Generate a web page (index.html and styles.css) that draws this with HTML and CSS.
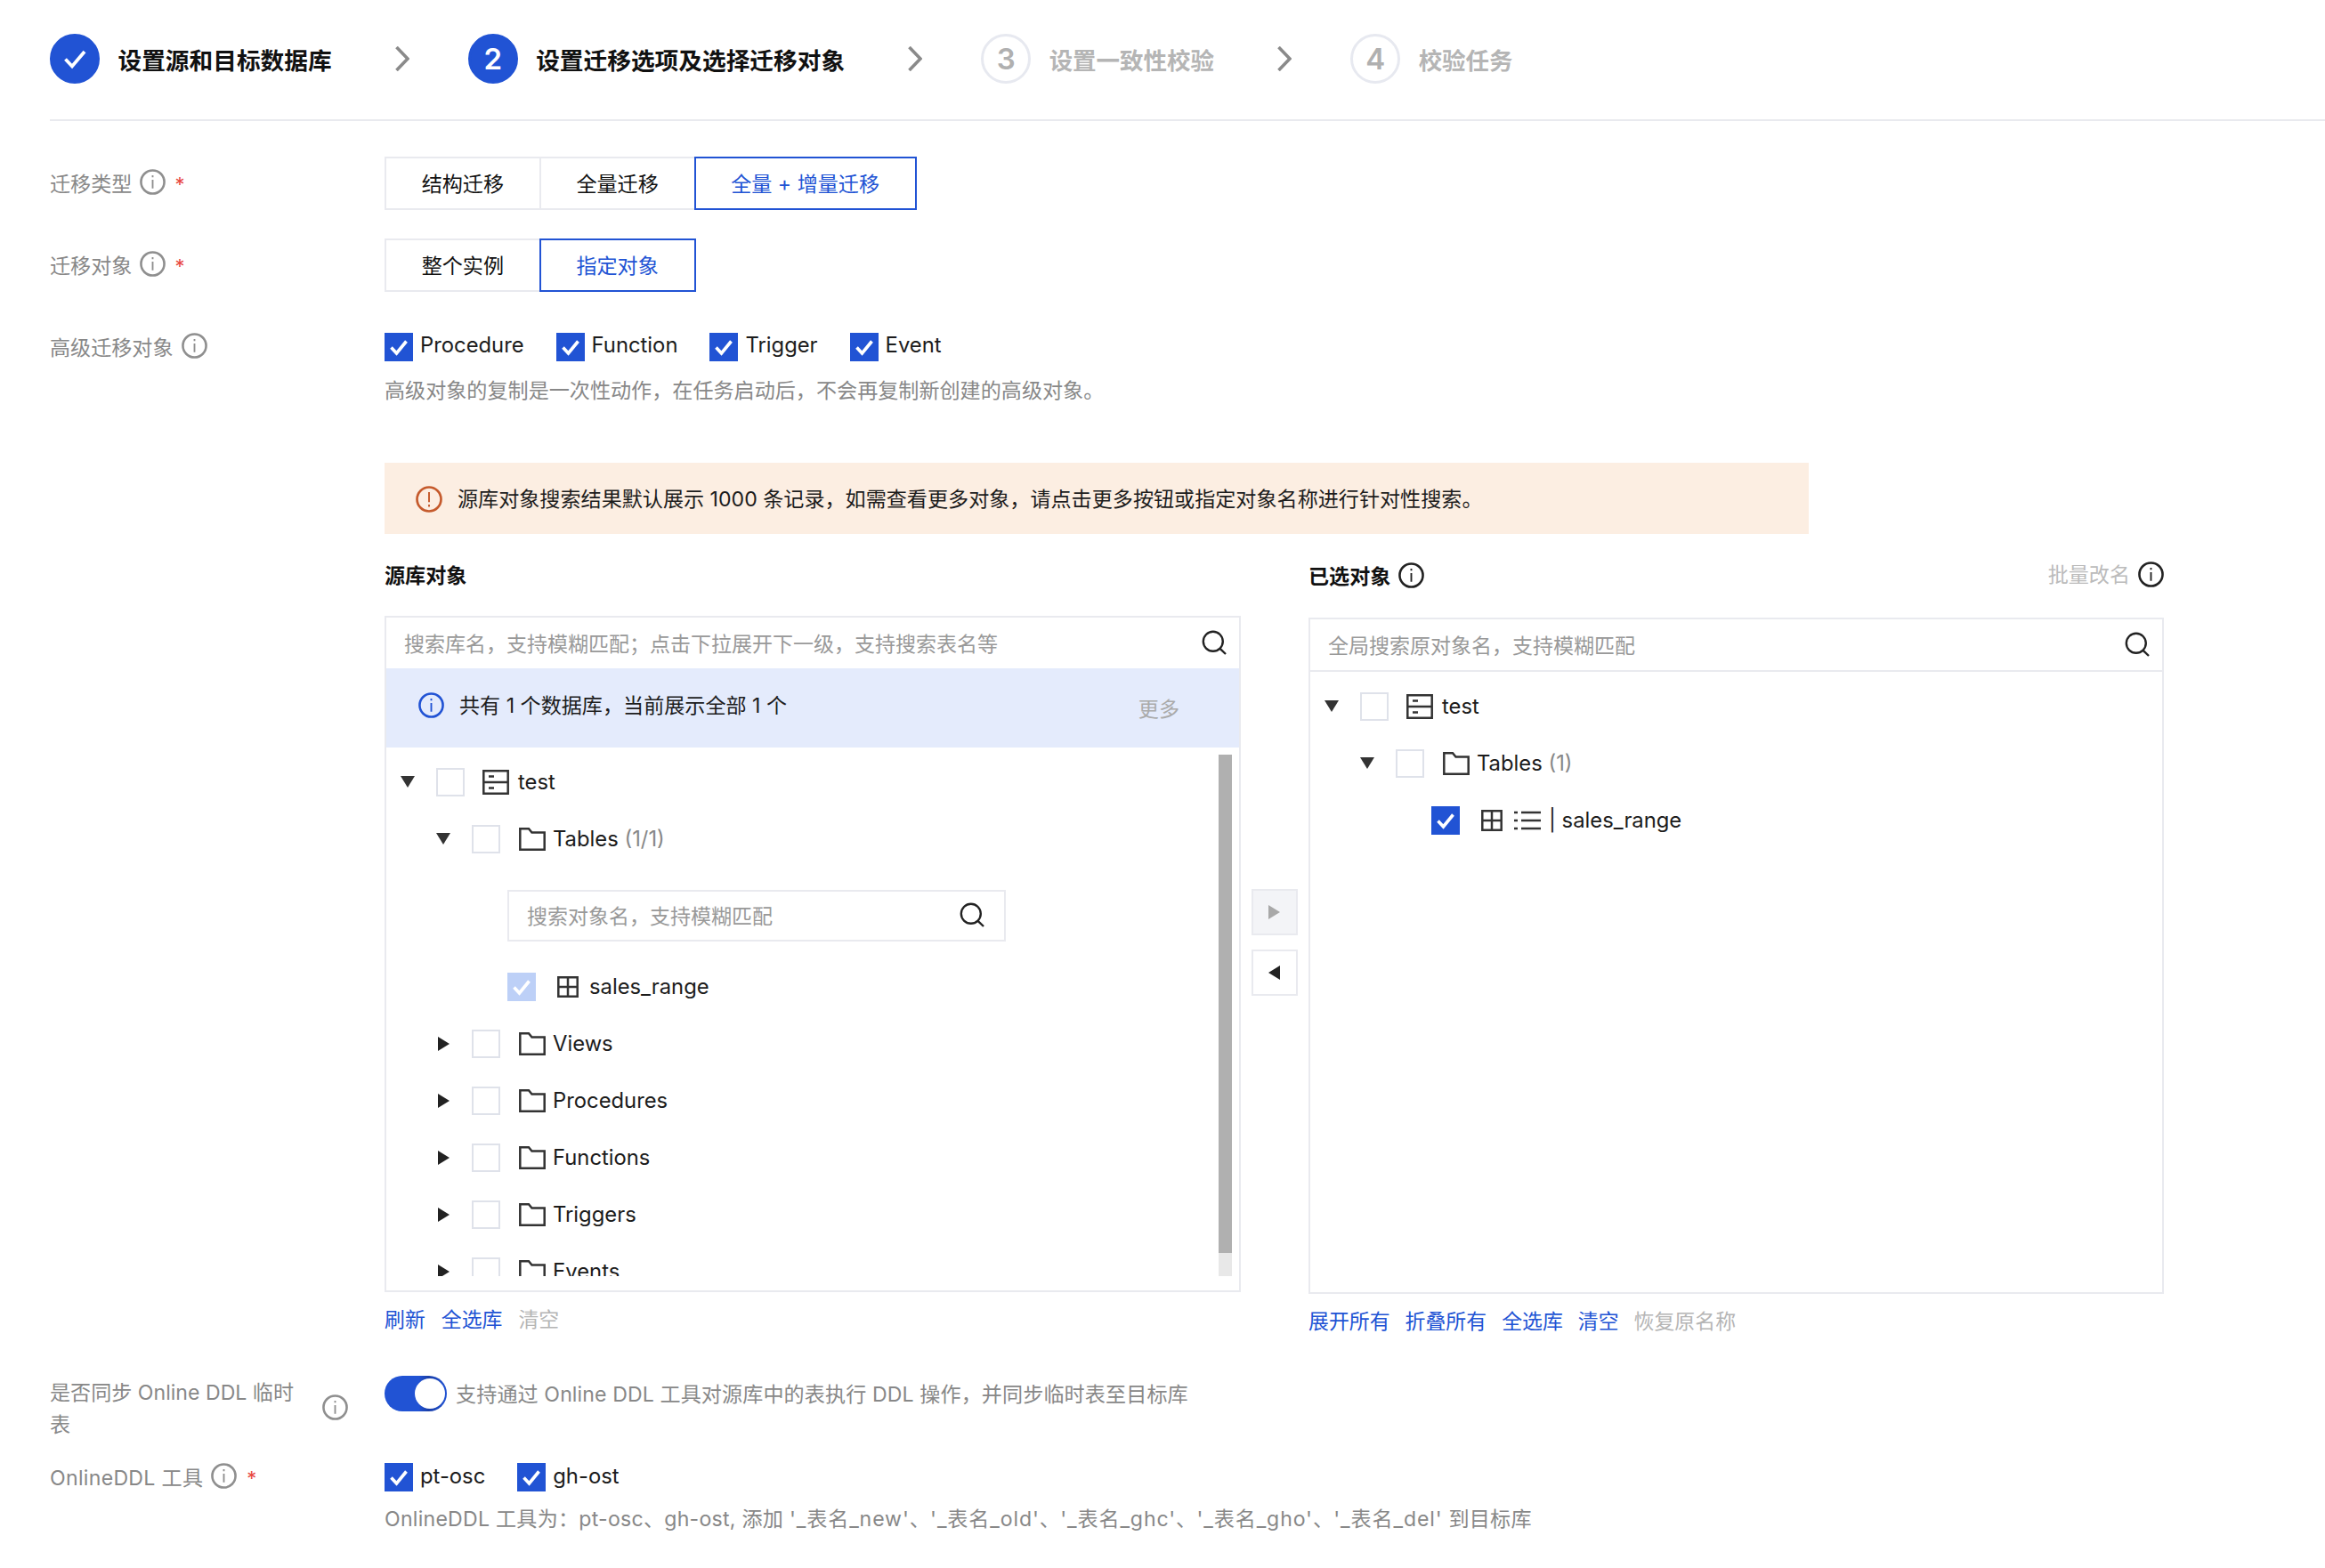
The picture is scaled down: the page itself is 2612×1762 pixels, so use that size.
FILE: index.html
```html
<!DOCTYPE html>
<html lang="zh-CN">
<head>
<meta charset="utf-8">
<title>设置迁移选项</title>
<link rel="stylesheet" href="styles.css">
</head>
<body>
<svg class="defs" aria-hidden="true">
  <symbol id="i-info" viewBox="0 0 28 28"><circle cx="14" cy="14" r="12.6" fill="none" stroke="currentColor" stroke-width="2.5"/><path d="M14 11.5V21M14 6.8V9" fill="none" stroke="currentColor" stroke-width="1.8"/></symbol>
  <symbol id="i-warn" viewBox="0 0 28 28"><circle cx="14" cy="14" r="12.6" fill="none" stroke="currentColor" stroke-width="2.5"/><path d="M14 6.5V17M14 19.5V22" fill="none" stroke="currentColor" stroke-width="1.8"/></symbol>
  <symbol id="i-search" viewBox="0 0 28 28"><circle cx="12.8" cy="12.8" r="11" fill="none" stroke="currentColor" stroke-width="2.4"/><path d="M20.6 20.8L27 27" fill="none" stroke="currentColor" stroke-width="2.4"/></symbol>
  <symbol id="i-chev" viewBox="0 0 16 28"><path d="M1.5 1L14 14L1.5 27" fill="none" stroke="currentColor" stroke-width="3.6"/></symbol>
  <symbol id="i-check" viewBox="0 0 32 32"><path d="M7.5 16.5L13.5 23L24.5 9.5" fill="none" stroke="#fff" stroke-width="3.6"/></symbol>
  <symbol id="i-check-lg" viewBox="0 0 32 32"><path d="M5.5 16.5L13 24.5L27 8" fill="none" stroke="#fff" stroke-width="3.8"/></symbol>
  <symbol id="i-down" viewBox="0 0 16 13"><path d="M0 0H16L8 13Z" fill="currentColor"/></symbol>
  <symbol id="i-right" viewBox="0 0 13 16"><path d="M0 0L13 8L0 16Z" fill="currentColor"/></symbol>
  <symbol id="i-left" viewBox="0 0 13 16"><path d="M13 0L0 8L13 16Z" fill="currentColor"/></symbol>
  <symbol id="i-folder" viewBox="0 0 30 26"><path d="M1.3 24.7V1.3H11L14.5 5.5H28.7V24.7Z" fill="none" stroke="currentColor" stroke-width="2.5"/></symbol>
  <symbol id="i-db" viewBox="0 0 30 28"><path d="M1.3 1.3H28.7V26.7H1.3ZM1.3 14H28.7M7 7.5H13M7 20.5H13" fill="none" stroke="currentColor" stroke-width="2.5"/></symbol>
  <symbol id="i-grid" viewBox="0 0 24 24"><path d="M1.3 1.3H22.7V22.7H1.3ZM1.3 12H22.7M12 1.3V22.7" fill="none" stroke="currentColor" stroke-width="2.5"/></symbol>
  <symbol id="i-list" viewBox="0 0 30 24"><path d="M8 3H30M8 12H30M8 21H30M0 3H4M0 12H4M0 21H4" fill="none" stroke="currentColor" stroke-width="2.4"/></symbol>
</svg>

<div class="page">
  <header class="steps">
    <div class="step">
      <span class="step-dot done"><svg class="ic-check-lg"><use href="#i-check-lg"/></svg></span>
      <span class="step-text">设置源和目标数据库</span>
    </div>
    <svg class="chev"><use href="#i-chev"/></svg>
    <div class="step">
      <span class="step-dot done">2</span>
      <span class="step-text">设置迁移选项及选择迁移对象</span>
    </div>
    <svg class="chev"><use href="#i-chev"/></svg>
    <div class="step off">
      <span class="step-dot">3</span>
      <span class="step-text">设置一致性校验</span>
    </div>
    <svg class="chev"><use href="#i-chev"/></svg>
    <div class="step off">
      <span class="step-dot">4</span>
      <span class="step-text">校验任务</span>
    </div>
  </header>

  <section class="row row-type">
    <div class="label">迁移类型<svg class="info"><use href="#i-info"/></svg><span class="star">*</span></div>
    <div class="seg"><span class="seg-btn">结构迁移</span><span class="seg-btn">全量迁移</span><span class="seg-btn on">全量 + 增量迁移</span></div>
  </section>

  <section class="row row-gap">
    <div class="label">迁移对象<svg class="info"><use href="#i-info"/></svg><span class="star">*</span></div>
    <div class="seg"><span class="seg-btn">整个实例</span><span class="seg-btn on">指定对象</span></div>
  </section>

  <section class="row row-gap">
    <div class="label">高级迁移对象<svg class="info"><use href="#i-info"/></svg></div>
    <div>
      <div class="checks">
        <label class="check"><span class="box on"><svg><use href="#i-check"/></svg></span><span class="check-text">Procedure</span></label>
        <label class="check"><span class="box on"><svg><use href="#i-check"/></svg></span><span class="check-text">Function</span></label>
        <label class="check"><span class="box on"><svg><use href="#i-check"/></svg></span><span class="check-text">Trigger</span></label>
        <label class="check"><span class="box on"><svg><use href="#i-check"/></svg></span><span class="check-text">Event</span></label>
      </div>
      <p class="help">高级对象的复制是一次性动作，在任务启动后，不会再复制新创建的高级对象。</p>
    </div>
  </section>

  <div class="objects">
    <div class="alert"><svg class="alert-ic"><use href="#i-warn"/></svg>源库对象搜索结果默认展示 1000 条记录，如需查看更多对象，请点击更多按钮或指定对象名称进行针对性搜索。</div>

    <div class="transfer">
      <div class="panel">
        <div class="panel-head left-head"><strong>源库对象</strong></div>
        <div class="panel-box">
          <div class="search main-search"><span>搜索库名，支持模糊匹配；点击下拉展开下一级，支持搜索表名等</span><svg class="ic-search"><use href="#i-search"/></svg></div>
          <div class="banner">
            <svg class="banner-ic"><use href="#i-info"/></svg>
            <span class="banner-text">共有 1 个数据库，当前展示全部 1 个</span>
            <span class="more">更多</span>
          </div>
          <div class="tree-wrap">
            <div class="tree">
              <div class="node lv0"><svg class="tri-d"><use href="#i-down"/></svg><span class="box"></span><svg class="ic-db"><use href="#i-db"/></svg><span>test</span></div>
              <div class="node lv1"><svg class="tri-d"><use href="#i-down"/></svg><span class="box"></span><svg class="ic-folder"><use href="#i-folder"/></svg><span>Tables <em>(1/1)</em></span></div>
              <div class="search sub-search"><span>搜索对象名，支持模糊匹配</span><svg class="ic-search"><use href="#i-search"/></svg></div>
              <div class="node lv2"><span class="box soft"><svg><use href="#i-check"/></svg></span><svg class="ic-grid"><use href="#i-grid"/></svg><span>sales_range</span></div>
              <div class="node lv1"><svg class="tri-r"><use href="#i-right"/></svg><span class="box"></span><svg class="ic-folder"><use href="#i-folder"/></svg><span>Views</span></div>
              <div class="node lv1"><svg class="tri-r"><use href="#i-right"/></svg><span class="box"></span><svg class="ic-folder"><use href="#i-folder"/></svg><span>Procedures</span></div>
              <div class="node lv1"><svg class="tri-r"><use href="#i-right"/></svg><span class="box"></span><svg class="ic-folder"><use href="#i-folder"/></svg><span>Functions</span></div>
              <div class="node lv1"><svg class="tri-r"><use href="#i-right"/></svg><span class="box"></span><svg class="ic-folder"><use href="#i-folder"/></svg><span>Triggers</span></div>
              <div class="node lv1"><svg class="tri-r"><use href="#i-right"/></svg><span class="box"></span><svg class="ic-folder"><use href="#i-folder"/></svg><span>Events</span></div>
            </div>
            <div class="scrollbar"><div class="thumb"></div></div>
          </div>
        </div>
        <div class="links left-links"><a class="link">刷新</a><a class="link">全选库</a><a class="link muted">清空</a></div>
      </div>

      <div class="mid">
        <span class="mid-btn off"><svg class="tri-m"><use href="#i-right"/></svg></span>
        <span class="mid-btn"><svg class="tri-m"><use href="#i-left"/></svg></span>
      </div>

      <div class="panel right">
        <div class="panel-head right-head">
          <strong>已选对象</strong><svg class="info dark"><use href="#i-info"/></svg>
          <span class="rename">批量改名</span><svg class="info dark raised"><use href="#i-info"/></svg>
        </div>
        <div class="panel-box">
          <div class="search main-search right-search"><span>全局搜索原对象名，支持模糊匹配</span><svg class="ic-search"><use href="#i-search"/></svg></div>
          <div class="tree">
            <div class="node lv0"><svg class="tri-d"><use href="#i-down"/></svg><span class="box"></span><svg class="ic-db"><use href="#i-db"/></svg><span>test</span></div>
            <div class="node lv1"><svg class="tri-d"><use href="#i-down"/></svg><span class="box"></span><svg class="ic-folder"><use href="#i-folder"/></svg><span>Tables <em>(1)</em></span></div>
            <div class="node lv2"><span class="box on"><svg><use href="#i-check"/></svg></span><svg class="ic-grid"><use href="#i-grid"/></svg><svg class="ic-list"><use href="#i-list"/></svg><span>| sales_range</span></div>
          </div>
        </div>
        <div class="links"><a class="link">展开所有</a><a class="link">折叠所有</a><a class="link">全选库</a><a class="link">清空</a><a class="link muted">恢复原名称</a></div>
      </div>
    </div>
  </div>

  <section class="row row-ddl">
    <div class="label label-wrap"><span class="label-lines">是否同步 Online DDL 临时表</span><svg class="info"><use href="#i-info"/></svg></div>
    <div class="toggle-line"><span class="toggle"><span class="knob"></span></span><span class="help-inline">支持通过 Online DDL 工具对源库中的表执行 DDL 操作，并同步临时表至目标库</span></div>
  </section>

  <section class="row row-tool">
    <div class="label label-tool">OnlineDDL 工具<svg class="info"><use href="#i-info"/></svg><span class="star">*</span></div>
    <div>
      <div class="checks checks-tool">
        <label class="check"><span class="box on"><svg><use href="#i-check"/></svg></span><span class="check-text">pt-osc</span></label>
        <label class="check"><span class="box on"><svg><use href="#i-check"/></svg></span><span class="check-text">gh-ost</span></label>
      </div>
      <p class="help help-tool">OnlineDDL 工具为：pt-osc、gh-ost, 添加 <span class="quoted">'_表名_new'</span>、<span class="quoted">'_表名_old'</span>、<span class="quoted">'_表名_ghc'</span>、<span class="quoted">'_表名_gho'</span>、<span class="quoted">'_表名_del'</span> 到目标库</p>
    </div>
  </section>
</div>
</body>
</html>
```
FILE: styles.css
```css
* { box-sizing: border-box; }
html, body { margin: 0; padding: 0; background: #fff; }
body {
  font-family: "Inter", "Noto Sans CJK SC", sans-serif;
  font-size: 23.1px;
  line-height: 36px;
  color: #1c1c1c;
  overflow: hidden;
}
.defs { position: absolute; width: 0; height: 0; overflow: hidden; }
svg { display: block; flex: none; }
p { margin: 0; }
em { font-style: normal; color: #888; }

.page { padding-left: 56px; width: 2612px; height: 1762px; overflow: hidden; }

/* steps */
.steps {
  display: flex;
  align-items: center;
  height: 136px;
  padding-bottom: 2px;
  border-bottom: 2px solid #e9eaef;
}
.step { display: flex; align-items: center; gap: 20.5px; }
.step-dot {
  width: 56px; height: 56px;
  border-radius: 50%;
  border: 3px solid #e7e9f0;
  display: flex; align-items: center; justify-content: center;
  font-size: 33px; font-weight: 600;
  color: #b0b0b0;
}
.step-dot.done { background: #2153d4; border-color: #2153d4; color: #fff; }
.ic-check-lg { width: 32px; height: 32px; }
.step-text { font-size: 26.7px; font-weight: 600; color: #111; padding-top: 4px; }
.step.off .step-text { color: #b5b5b5; font-size: 26.5px; }
.chev { width: 16px; height: 28px; color: #8a8a8a; margin: 0 66px 0 71px; }

/* form rows */
.row { display: grid; grid-template-columns: 376px 1fr; }
.row-type { margin-top: 40px; }
.row-gap { margin-top: 32px; }
.label { display: flex; align-items: center; height: 60px; padding-top: 2px; color: #888; }
.info { width: 29px; height: 29px; margin-left: 9px; margin-bottom: 6px; color: #8f8f8f; }
.info.dark { color: #222; margin-bottom: 3px; }
.info.raised { margin-bottom: 5px; }
.star { color: #e8483f; margin-left: 10px; font-size: 22px; line-height: 1; }

.seg { display: flex; height: 60px; }
.seg-btn {
  display: flex; align-items: center; justify-content: center;
  padding: 2px 39.7px 0;
  border: 2px solid #e9eaef;
  margin-left: -2px;
  background: #fff;
  color: #111;
}
.seg-btn:first-child { margin-left: 0; }
.seg-btn.on { border-color: #2153d4; color: #2153d4; position: relative; }

.checks { display: flex; align-items: center; height: 60px; gap: 36px; }
.check { display: flex; align-items: center; gap: 8px; }
.check-text { font-size: 23.8px; margin-bottom: 4px; color: #1c1c1c; }
.box {
  display: block; flex: none;
  width: 32px; height: 32px;
  border: 2px solid #dfe2ea;
  background: #fff;
}
.box svg { width: 32px; height: 32px; margin: -2px; }
.box.on { background: #2153d4; border-color: #2153d4; }
.box.soft { background: #bdd0f7; border-color: #bdd0f7; }
.help { color: #888; padding-top: 1px; }
.help-inline { color: #888; padding-top: 2px; letter-spacing: 0.1px; }

/* objects */
.objects { margin-left: 376px; margin-top: 63px; }
.alert {
  display: flex; align-items: center;
  width: 1600px; height: 80px;
  padding: 2px 0 0 35px;
  background: #fceee2;
  color: #1c1c1c;
}
.alert-ic { width: 30px; height: 30px; color: #c55a2c; margin-right: 17px; }

.transfer { display: grid; grid-template-columns: 962px 76px 961px; }
.panel-head { display: flex; align-items: center; padding-top: 2px; }
.panel-head strong { font-weight: 700; color: #111; }
.left-head { height: 92px; }
.right-head { height: 94px; }
.rename { margin-left: auto; margin-bottom: 4px; color: #bbb; }
.panel-box {
  height: 760px;
  border: 2px solid #e9eaef;
  position: relative;
}
.search {
  display: flex; align-items: center; justify-content: space-between;
  padding-top: 2px;
  color: #999;
  font-size: 23px;
}
.main-search { height: 57px; padding-left: 20px; padding-right: 14px; }
.right-search { border-bottom: 2px solid #e9eaef; height: 59px; padding-right: 14px; }
.ic-search { width: 28px; height: 28px; color: #222; margin-bottom: 4px; }

.banner {
  display: flex; align-items: center;
  height: 89px;
  padding: 0 67px 6px 36px;
  background: #e4ebfc;
}
.banner-ic { width: 29px; height: 29px; color: #2153d4; margin-right: 17px; }
.more { margin-left: auto; color: #aaa; padding-top: 8px; }

.tree-wrap { height: 594px; overflow: hidden; position: relative; }
.tree { padding-top: 7px; }
.node { display: flex; align-items: center; height: 64px; font-size: 23.8px; }
.tri-d { width: 16px; height: 13px; color: #333; margin-right: 24px; margin-bottom: 2px; }
.tri-r { width: 13px; height: 16px; color: #222; margin-left: 2px; margin-right: 25px; }
.ic-db { width: 30px; height: 28px; color: #333; margin: 0 10px 0 20px; }
.ic-folder { width: 30px; height: 26px; color: #333; margin: 0 8px 0 21px; }
.ic-grid { width: 24px; height: 24px; color: #333; margin: 0 12px 0 24px; }
.ic-list { width: 30px; height: 24px; color: #333; margin: 0 9px 0 1px; }
.lv0 { padding-left: 16px; }
.lv1 { padding-left: 56px; }
.lv2 { padding-left: 136px; }
.sub-search {
  margin: 25px 0 19px 136px;
  width: 560px; height: 58px;
  border: 2px solid #e9eaef;
  padding: 2px 22px 0 20px;
}
.scrollbar {
  position: absolute; right: 8px; top: 8px;
  width: 15px; height: 586px;
  background: #e8e8e8;
}
.thumb { height: 560px; background: #b0b0b0; }

.links { display: flex; gap: 17px; margin-top: 12px; padding-top: 1px; font-size: 22.9px; }
.left-links { gap: 18px; }
.link { color: #2153d4; }
.link.muted { color: #b5b5b5; }

.mid { display: flex; flex-direction: column; align-items: center; gap: 16px; padding: 399px 1px 0 0; }
.mid-btn {
  width: 52px; height: 52px;
  border: 2px solid #e9eaef;
  display: flex; align-items: center; justify-content: center;
  color: #222;
}
.mid-btn.off { background: #f3f4f7; color: #a8a8a8; }
.tri-m { width: 13px; height: 16px; }

/* bottom rows */
.row-ddl { margin-top: 43px; }
.label-wrap { height: 72px; align-items: center; }
.label-lines { width: 290px; }
.label-wrap .info { margin-left: 16px; margin-bottom: 3px; }
.toggle-line { display: flex; align-items: center; height: 40px; gap: 10px; }
.toggle {
  width: 70px; height: 40px;
  border-radius: 20px;
  background: linear-gradient(90deg, #2153d4 55%, #1a3fa8 70%, #2153d4 100%);
  display: flex; align-items: center; justify-content: flex-end;
  padding-right: 2px;
}
.knob { width: 34px; height: 34px; border-radius: 50%; background: #fff; }
.row-tool { margin-top: 24px; }
.label-tool { height: 36px; letter-spacing: 0.3px; }
.label-tool .info { margin-bottom: 5px; }
.label-tool .star { margin-left: 11px; }
.checks-tool { height: 36px; }
.checks-tool .check-text { margin-bottom: 2px; }
.help-tool { margin-top: 10px; letter-spacing: 0.25px; }
.quoted { letter-spacing: 0.9px; }
```
